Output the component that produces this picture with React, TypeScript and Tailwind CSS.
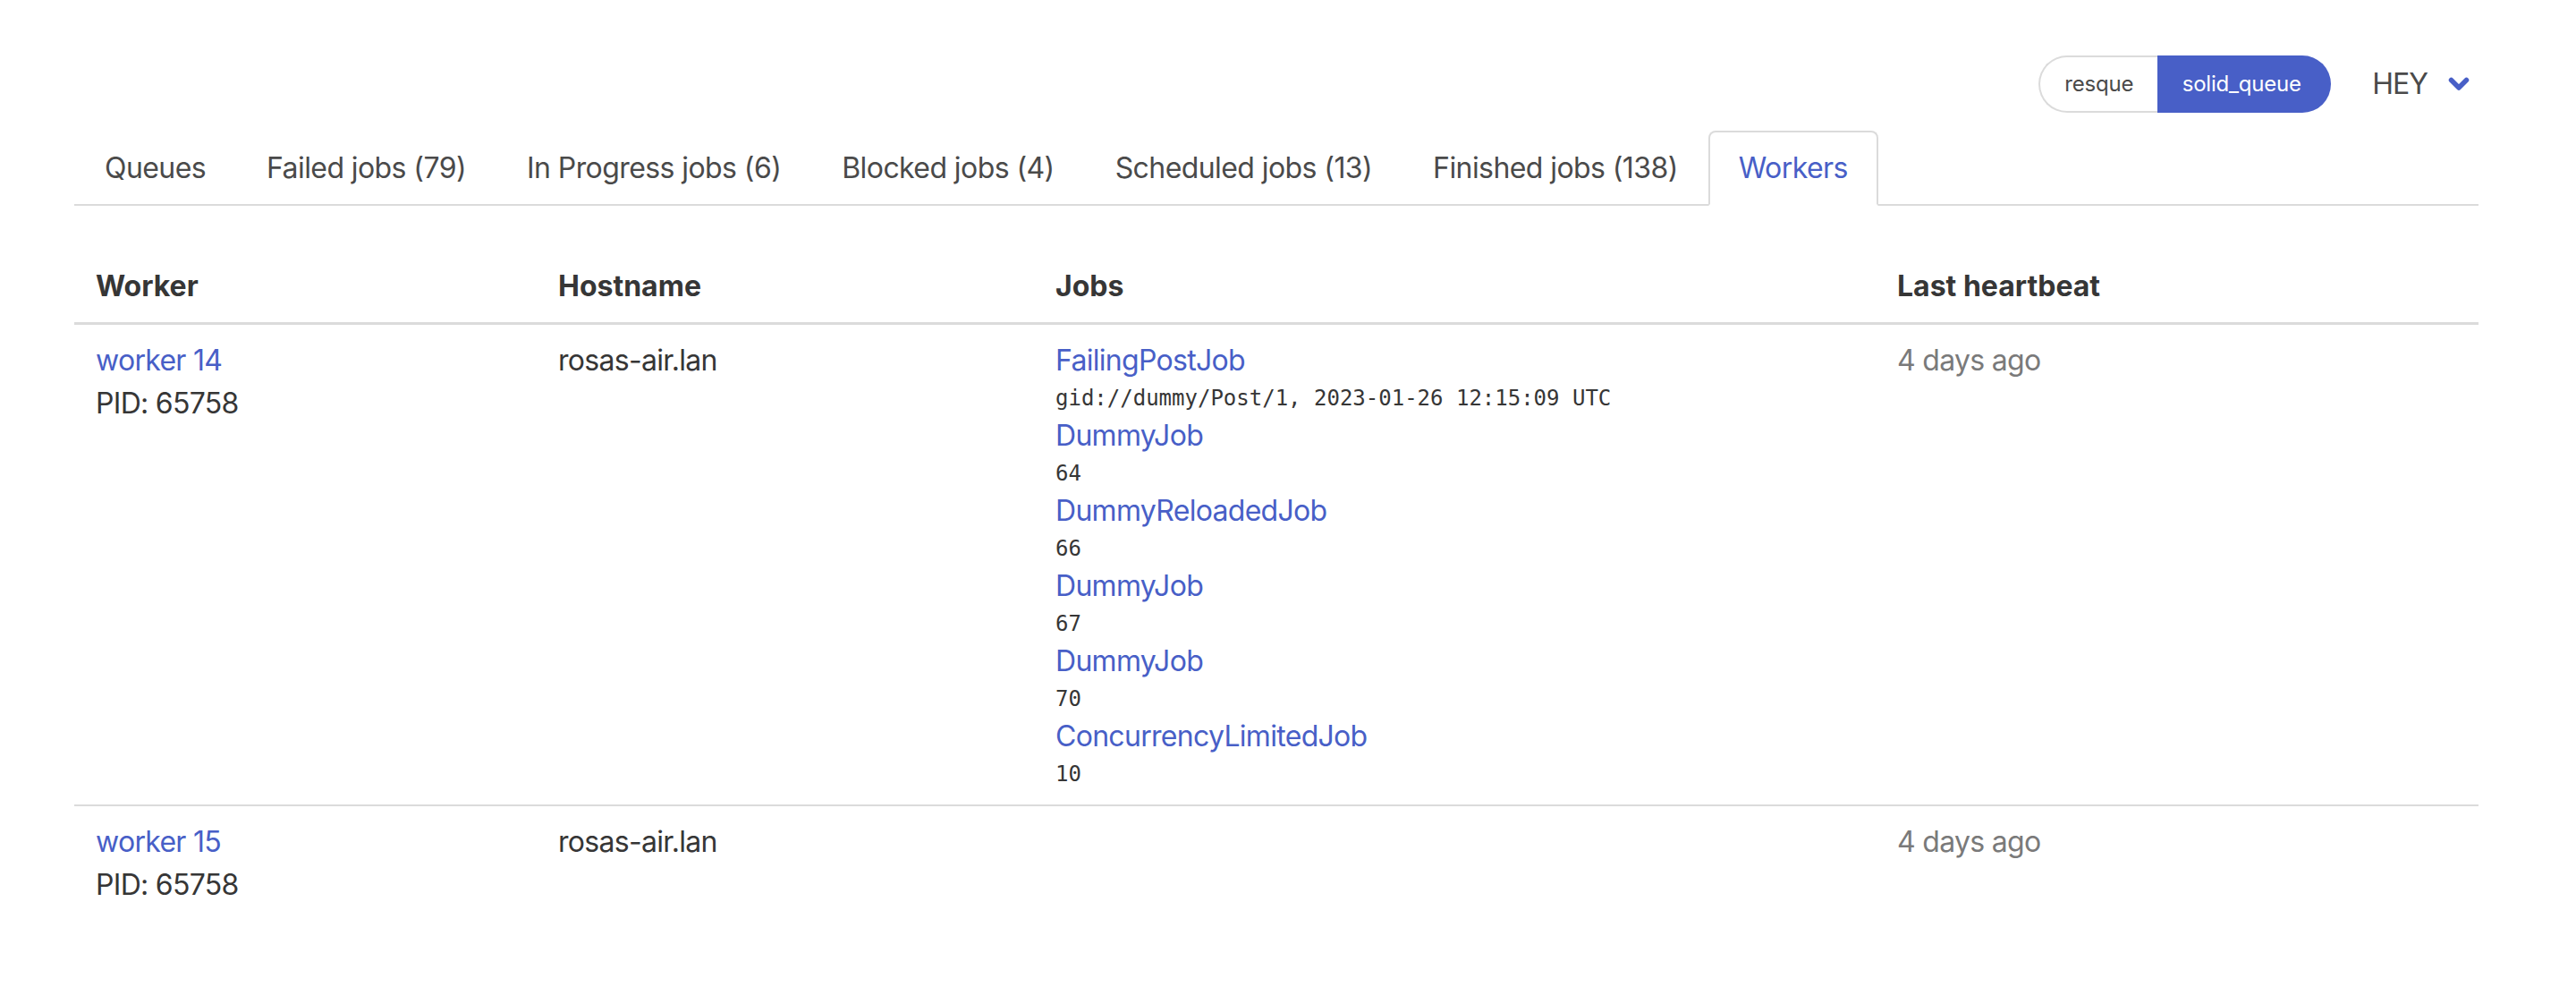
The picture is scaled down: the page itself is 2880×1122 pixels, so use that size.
import { ReactNode } from 'react'

type Tab = { label: string; active?: boolean }

const tabs: Tab[] = [
  { label: 'Queues' },
  { label: 'Failed jobs (79)' },
  { label: 'In Progress jobs (6)' },
  { label: 'Blocked jobs (4)' },
  { label: 'Scheduled jobs (13)' },
  { label: 'Finished jobs (138)' },
  { label: 'Workers', active: true },
]

type Job = { name: string; args: string }

type Worker = {
  name: string
  pid: number
  hostname: string
  jobs: Job[]
  heartbeat: string
}

const workers: Worker[] = [
  {
    name: 'worker 14',
    pid: 65758,
    hostname: 'rosas-air.lan',
    heartbeat: '4 days ago',
    jobs: [
      { name: 'FailingPostJob', args: 'gid://dummy/Post/1, 2023-01-26 12:15:09 UTC' },
      { name: 'DummyJob', args: '64' },
      { name: 'DummyReloadedJob', args: '66' },
      { name: 'DummyJob', args: '67' },
      { name: 'DummyJob', args: '70' },
      { name: 'ConcurrencyLimitedJob', args: '10' },
    ],
  },
  {
    name: 'worker 15',
    pid: 65758,
    hostname: 'rosas-air.lan',
    heartbeat: '4 days ago',
    jobs: [],
  },
]

function ChevronDown() {
  return (
    <svg width="24" height="16" viewBox="0 0 24 16" fill="none">
      <path
        d="M3.5 3.5 L12 12 L20.5 3.5"
        stroke="#485fc7"
        strokeWidth="5.5"
        strokeLinecap="round"
        strokeLinejoin="round"
      />
    </svg>
  )
}

function Th({ children }: { children: ReactNode }) {
  return (
    <th className="border-b-[3px] border-[#dbdbdb] px-[24px] py-[16px] text-left align-top font-bold tracking-normal text-[#363636]">
      {children}
    </th>
  )
}

export default function App() {
  return (
    <div className="min-h-screen bg-white font-['Inter',sans-serif] text-[32px] leading-[48px] text-[#4a4a4a] antialiased">
      <div className="ml-[83px] w-[2688px]">
        {/* Top bar */}
        <header className="flex h-[146px] items-start justify-end pr-[10px] pt-[62px]">
          <div className="flex h-[64px] text-[24px] tracking-[-0.2px]">
            <a className="flex w-[133px] items-center justify-center rounded-l-full border-2 border-r-0 border-[#dbdbdb] bg-white text-[#4a4a4a]">
              resque
            </a>
            <a className="flex w-[194px] items-center justify-center rounded-r-full bg-[#485fc7] pr-[6px] text-white">
              solid_queue
            </a>
          </div>
          <div className="ml-[46px] flex h-[64px] items-center gap-[23px]">
            <span className="tracking-[-1px] text-[#4a4a4a]">HEY</span>
            <ChevronDown />
          </div>
        </header>

        {/* Tabs */}
        <nav className="flex border-b-2 border-[#dbdbdb] tracking-[-0.58px]">
          {tabs.map(tab => (
            <a
              key={tab.label}
              className={`-mb-[2px] rounded-t-[8px] border-2 px-[32px] py-[16px] ${
                tab.active
                  ? 'border-[#dbdbdb] border-b-white bg-white text-[#485fc7]'
                  : 'border-transparent text-[#4a4a4a]'
              }`}
            >
              {tab.label}
            </a>
          ))}
        </nav>

        {/* Workers table */}
        <table className="mt-[50px] w-full table-fixed border-collapse tracking-[-0.7px] text-[#363636]">
          <colgroup>
            <col className="w-[517px]" />
            <col className="w-[556px]" />
            <col className="w-[941px]" />
            <col />
          </colgroup>
          <thead>
            <tr>
              <Th>Worker</Th>
              <Th>Hostname</Th>
              <Th>Jobs</Th>
              <Th>Last heartbeat</Th>
            </tr>
          </thead>
          <tbody>
            {workers.map((worker, i) => (
              <tr
                key={worker.name}
                className={i < workers.length - 1 ? 'border-b-2 border-[#dbdbdb]' : ''}
              >
                <td className="px-[24px] py-[16px] align-top">
                  <a className="block text-[#485fc7]">{worker.name}</a>
                  <div>PID: {worker.pid}</div>
                </td>
                <td className="px-[24px] py-[16px] align-top">{worker.hostname}</td>
                <td className="px-[24px] py-[16px] align-top">
                  {worker.jobs.map((job, j) => (
                    <div key={j}>
                      <a className="block text-[#485fc7]">{job.name}</a>
                      <div className="font-['DejaVu_Sans_Mono',monospace] text-[24px] leading-[36px] tracking-normal text-[#363636]">
                        {job.args}
                      </div>
                    </div>
                  ))}
                </td>
                <td className="px-[24px] py-[16px] align-top text-[#7a7a7a]">{worker.heartbeat}</td>
              </tr>
            ))}
          </tbody>
        </table>
      </div>
    </div>
  )
}
